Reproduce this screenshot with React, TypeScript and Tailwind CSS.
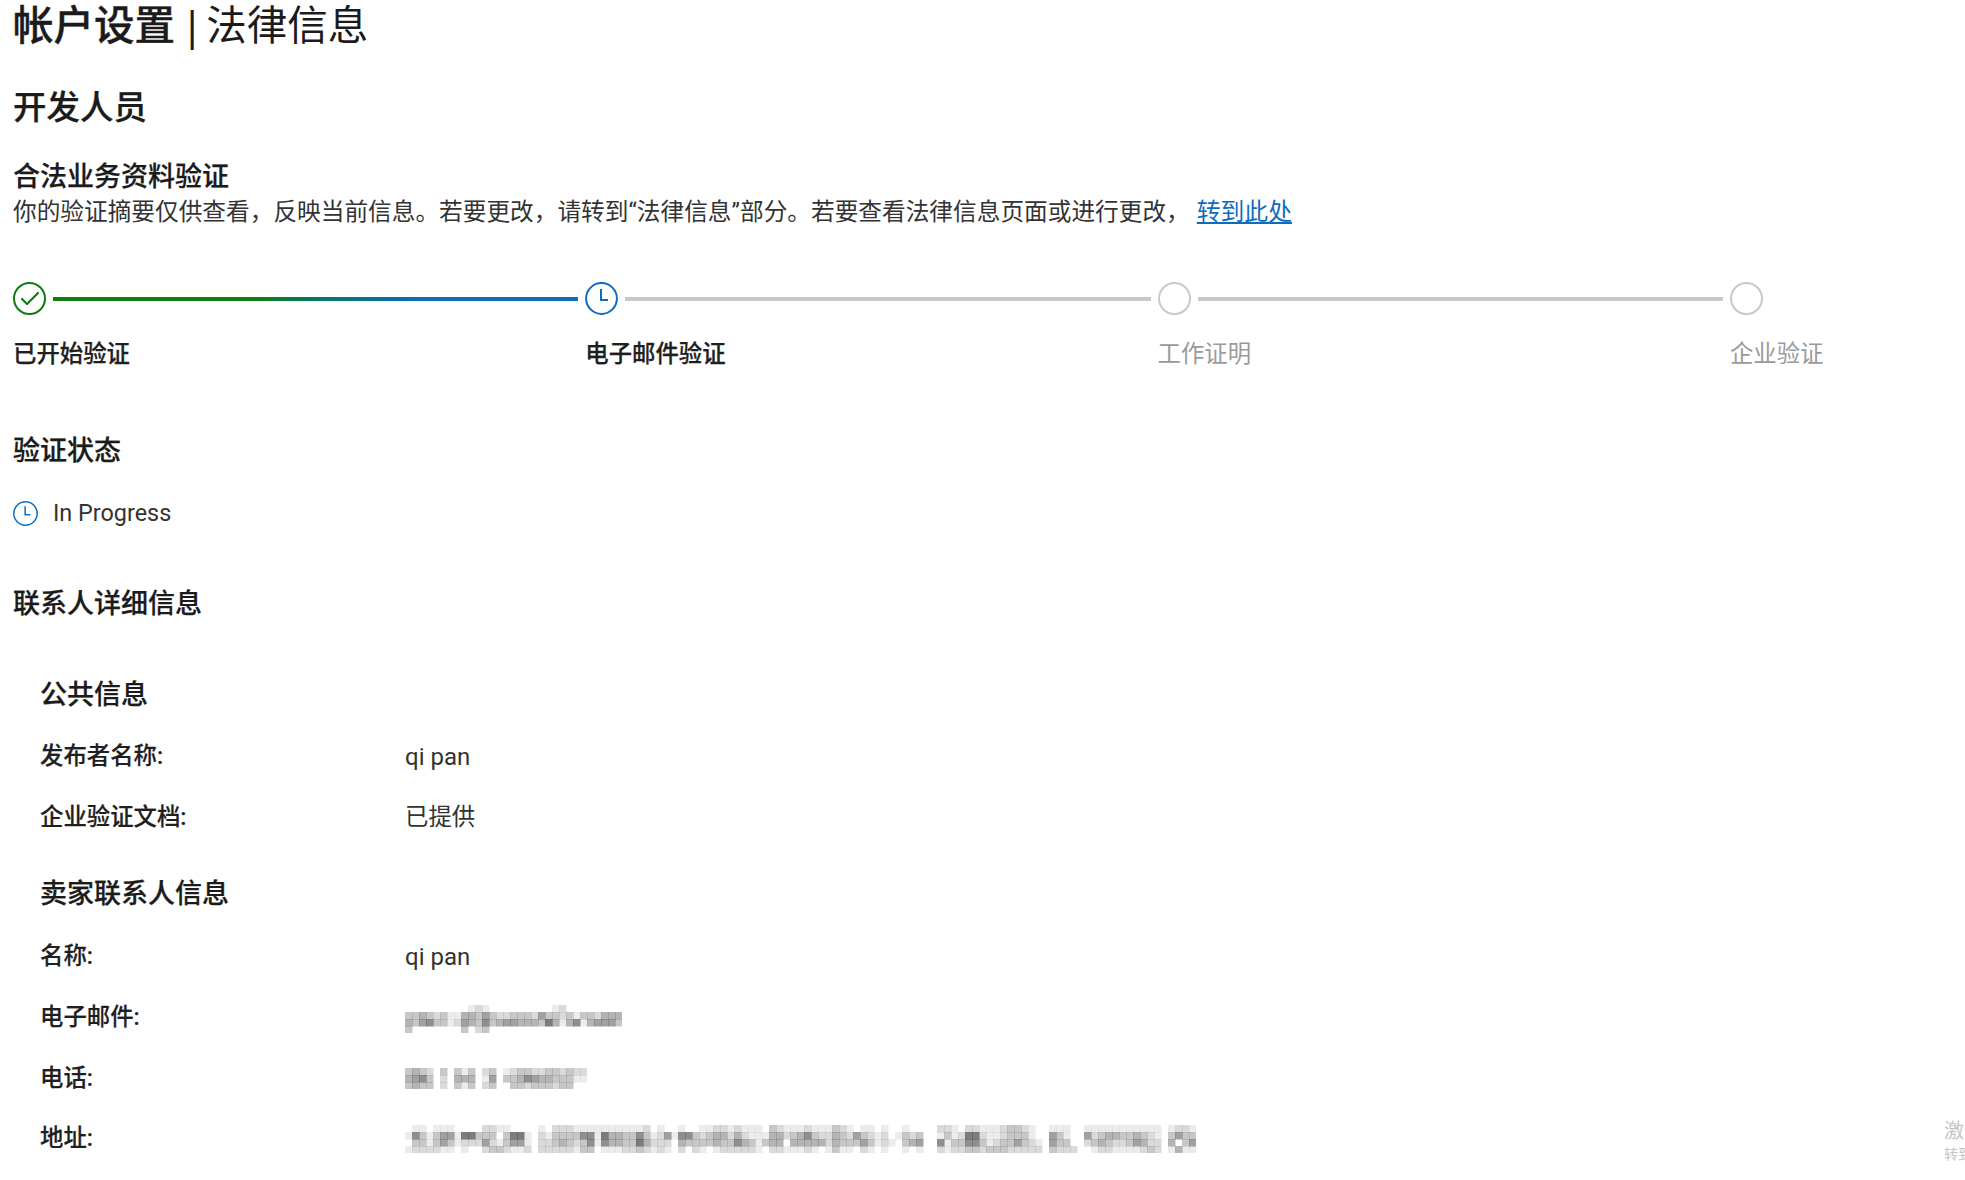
import { Check } from 'lucide-react';

const fonts = "font-['Roboto','Noto_Sans_CJK_SC',sans-serif]";
const heading = 'font-medium [-webkit-text-stroke:0.25px_#1b1b1b]';

function ClockIcon({ className }: { className?: string }) {
  return (
    <svg viewBox="0 0 33 33" fill="none" className={className}>
      <circle cx="16.5" cy="16.5" r="15.4" stroke="#0f6cbd" strokeWidth="2" />
      <path d="M16 7v11h7" stroke="#0f6cbd" strokeWidth="2" />
    </svg>
  );
}

// pixelated redaction, each string is one row, chars are darkness 0-9
function Mosaic({ rows, className }: { rows: string[]; className?: string }) {
  const cell = 7;
  return (
    <svg width={rows[0].length * cell} height={rows.length * cell} className={`blur-[0.5px] ${className ?? ''}`}>
      {rows.map((row, y) =>
        row.split('').map((c, x) =>
          c === '0' ? null : (
            <rect key={`${x}-${y}`} x={x * cell} y={y * cell} width={cell + 0.5} height={cell + 0.5} fill="#444" opacity={Number(c) / 10} />
          ),
        ),
      )}
    </svg>
  );
}

const steps = [
  { label: '已开始验证', state: 'done' },
  { label: '电子邮件验证', state: 'active' },
  { label: '工作证明', state: 'todo' },
  { label: '企业验证', state: 'todo' },
];

function Row({ label, children }: { label: string; children: React.ReactNode }) {
  return (
    <div className="flex h-[60.7px] items-center pl-[40px] text-[23.4px] text-[#1f1f1f]">
      <div className="w-[365px] font-medium [-webkit-text-stroke:0.2px_#1f1f1f]">{label}</div>
      <div className="text-[#333]">{children}</div>
    </div>
  );
}

export default function App() {
  return (
    <div className={`${fonts} relative h-[1180px] w-[1965px] overflow-hidden bg-white text-[#1b1b1b]`}>
      <div className="pl-[13px]">
        <h1 className="h-[50px] text-[40.5px] leading-[50px] font-medium whitespace-nowrap">
          <span className="[-webkit-text-stroke:0.4px_#1b1b1b]">帐户设置</span>
          <span className="mr-[3px] ml-[6px] font-['Noto_Sans'] font-normal">|</span>
          <span className="font-normal">法律信息</span>
        </h1>
        <h2 className={`mt-[37px] text-[33.5px] leading-[42px] ${heading}`}>开发人员</h2>
        <h3 className={`mt-[30.5px] text-[27px] leading-[34px] ${heading}`}>合法业务资料验证</h3>
        <p className="mt-[1px] text-[23.68px] leading-[34px] whitespace-nowrap text-[#333]">
          你的验证摘要仅供查看，反映当前信息。若要更改，请转到“法律信息”部分。若要查看法律信息页面或进行更改，
          <a className="ml-[7px] text-[23.8px] text-[#0f6cbd] underline">转到此处</a>
        </p>

        <div className="mt-[53.5px] flex">
          {steps.map((s, i) => (
            <div key={s.label} className={i < 3 ? 'w-[572.3px]' : 'w-[200px]'}>
              <div className="flex h-[33px] items-center">
                {s.state === 'done' && (
                  <div className="flex h-[33px] w-[33px] shrink-0 items-center justify-center rounded-full border-2 border-[#107c10] text-[#107c10]">
                    <Check className="h-[24px] w-[24px]" strokeWidth={2.2} />
                  </div>
                )}
                {s.state === 'active' && <ClockIcon className="h-[33px] w-[33px] shrink-0" />}
                {s.state === 'todo' && <div className="h-[33px] w-[33px] shrink-0 rounded-full border-2 border-[#c8c8c8]" />}
                {i < 3 && (
                  <div
                    className={`mr-[7px] ml-[7px] h-[4px] flex-1 ${i === 0 ? 'bg-gradient-to-r from-[#107c10] from-[40%] to-[#0f6cbd] to-[70%]' : 'bg-[#c8c8c8]'}`}
                  />
                )}
              </div>
              <div
                className={`mt-[22px] text-[23.4px] leading-[34px] whitespace-nowrap ${s.state === 'todo' ? 'text-[#9a9a9a]' : 'font-medium text-[#1f1f1f] [-webkit-text-stroke:0.25px_#1f1f1f]'}`}
              >
                {s.label}
              </div>
            </div>
          ))}
        </div>

        <h3 className={`mt-[63px] text-[27px] leading-[34px] ${heading}`}>验证状态</h3>
        <div className="mt-[29px] flex h-[34px] items-center text-[23.4px] text-[#333]">
          <ClockIcon className="-mt-[2px] h-[25px] w-[25px]" />
          <span className="ml-[15px]">In Progress</span>
        </div>
        <h3 className={`mt-[56px] text-[27px] leading-[34px] ${heading}`}>联系人详细信息</h3>
      </div>

      <h4 className={`mt-[57px] pl-[40px] text-[27px] leading-[34px] ${heading}`}>公共信息</h4>
      <div className="mt-[14.5px]">
        <Row label="发布者名称:">
          <span className="text-[24px]">qi pan</span>
        </Row>
        <Row label="企业验证文档:">已提供</Row>
      </div>
      <h4 className={`mt-[29.5px] pl-[40px] text-[27px] leading-[34px] ${heading}`}>卖家联系人信息</h4>
      <div className="mt-[15px]">
        <Row label="名称:">
          <span className="text-[24px]">qi pan</span>
        </Row>
        <Row label="电子邮件:">
          <Mosaic
            className="mt-[4px]"
            rows={[
              '0000000001210000000001200000000',
              '3343231144353223332533231332444',
              '4356331254363455444374146145553',
              '3000000030230000000000000000000',
            ]}
          />
        </Row>
        <Row label="电话:">
          <Mosaic
            rows={[
              '34320303130230123322332322',
              '45630204440150334654433311',
              '34330203130230033233323300',
            ]}
          />
        </Row>
        <Row label="地址:">
          <Mosaic
            rows={[
              '0110111000022110000102221111111111201001' + '0011221211103211121113210110100100002210' + '221112332100' + '11100' + '11111111111' + '0' + '1221',
              '1631355177333037710213333661744336312516' + '6323442421114423463224325321201323001312' + '772112333100' + '53100' + '52344334321' + '0' + '3533',
              '0331353122252135510223432361644337422204' + '3333433643134404444424333531210345006133' + '663123353210' + '53300' + '23432235422' + '0' + '4035',
              '1222211010023321120222221330111223212102' + '0210122222102211121013110210100101002122' + '332333222220' + '32220' + '01221111232' + '0' + '1411',
            ]}
          />
        </Row>
      </div>

      <div className="absolute top-[1118px] left-[1944px] whitespace-nowrap text-[#c4c4c4]">
        <div className="text-[20px] leading-[26px]">激活 Windows</div>
        <div className="text-[14px] leading-[20px]">转到“设置”以激活 Windows。</div>
      </div>
    </div>
  );
}
